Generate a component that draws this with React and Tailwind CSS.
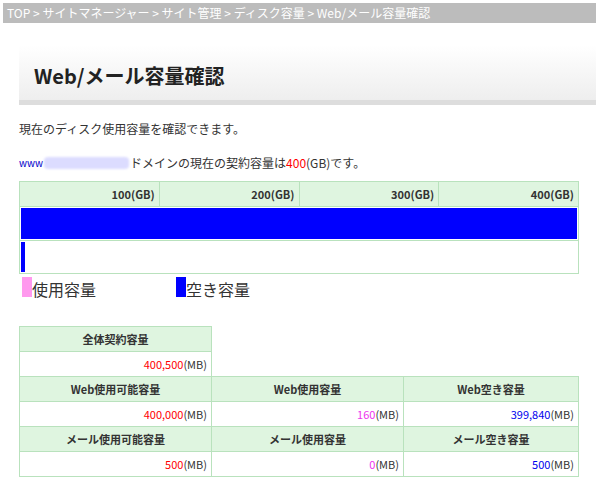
import React from 'react';

const font = { fontFamily: '"Noto Sans CJK JP", "Liberation Sans", sans-serif' };

const scale = ['100(GB)', '200(GB)', '300(GB)', '400(GB)'];

const Head = ({ children, className = '' }) => (
  <th className={`border border-[#b9e2bd] bg-[#dff5e0] h-[25px] text-[11px] font-bold text-[#333] text-center ${className}`}>
    {children}
  </th>
);

const Val = ({ num, color }) => (
  <td className="border border-[#b9e2bd] bg-white h-[25px] text-[11px] text-right pr-1 text-[#333]">
    <span className={color}>{num}</span>(MB)
  </td>
);

const App = () => {
  return (
    <div className="w-[599px] h-[497px] bg-white text-[#333] leading-none" style={font}>
      <div className="mx-[3px] mt-[3px] h-[20px] bg-[#bcbcbc] text-white text-[12px] flex items-center pl-[4px]">
        TOP &gt; サイトマネージャー &gt; サイト管理 &gt; ディスク容量 &gt; Web/メール容量確認
      </div>

      <div className="ml-[19px] mr-[3px] mt-[22px] h-[55px] bg-gradient-to-b from-white to-[#eeeeee] flex items-end pb-[14px] pl-[15px]">
        <h1 className="text-[20px] font-bold text-[#222]">Web/メール容量確認</h1>
      </div>
      <div className="ml-[19px] mr-[3px] h-[5px] bg-[#dddddd]" />

      <p className="ml-[19px] mt-[18px] text-[12px]">現在のディスク使用容量を確認できます。</p>

      <p className="ml-[19px] mt-[22px] text-[12px] flex items-center">
        <span className="text-[#0000cc] text-[10px]">www</span>
        <span className="inline-block w-[85px] h-[12px] mx-[1px] bg-[#dcdcff] rounded-sm blur-[1px]" />
        ドメインの現在の契約容量は<span className="text-[#f00]">400</span>(GB)です。
      </p>

      <table className="ml-[19px] mt-[12px] w-[560px] border-collapse table-fixed">
        <tbody>
          <tr>
            {scale.map((s) => (
              <td key={s} className="border border-[#b9e2bd] bg-[#dff5e0] h-[25px] text-[11px] font-bold text-right pr-1">
                {s}
              </td>
            ))}
          </tr>
          <tr>
            <td colSpan={4} className="border border-[#b9e2bd] h-[33px] p-[1px]">
              <div className="h-[31px] bg-[#0000ff]" />
            </td>
          </tr>
          <tr>
            <td colSpan={4} className="border border-[#b9e2bd] h-[33px] p-[1px]">
              <div className="h-[30px] w-[4px] bg-[#0000ff]" />
            </td>
          </tr>
        </tbody>
      </table>

      <div className="ml-[22px] mt-[3px] flex items-end text-[16px]">
        <span className="inline-block w-[10px] h-[20px] bg-[#ff99ee]" />
        <span className="w-[144px]">使用容量</span>
        <span className="inline-block w-[10px] h-[20px] bg-[#0000ff]" />
        <span>空き容量</span>
      </div>

      <table className="ml-[19px] mt-[29px] w-[560px] border-collapse table-fixed">
        <colgroup>
          <col className="w-[192px]" />
          <col className="w-[192px]" />
          <col />
        </colgroup>
        <tbody>
          <tr>
            <Head>全体契約容量</Head>
          </tr>
          <tr>
            <Val num="400,500" color="text-[#f00]" />
          </tr>
          <tr>
            <Head>Web使用可能容量</Head>
            <Head>Web使用容量</Head>
            <Head>Web空き容量</Head>
          </tr>
          <tr>
            <Val num="400,000" color="text-[#f00]" />
            <Val num="160" color="text-[#ee33ee]" />
            <Val num="399,840" color="text-[#0000ee]" />
          </tr>
          <tr>
            <Head>メール使用可能容量</Head>
            <Head>メール使用容量</Head>
            <Head>メール空き容量</Head>
          </tr>
          <tr>
            <Val num="500" color="text-[#f00]" />
            <Val num="0" color="text-[#ee33ee]" />
            <Val num="500" color="text-[#0000ee]" />
          </tr>
        </tbody>
      </table>
    </div>
  );
};

export default App;
